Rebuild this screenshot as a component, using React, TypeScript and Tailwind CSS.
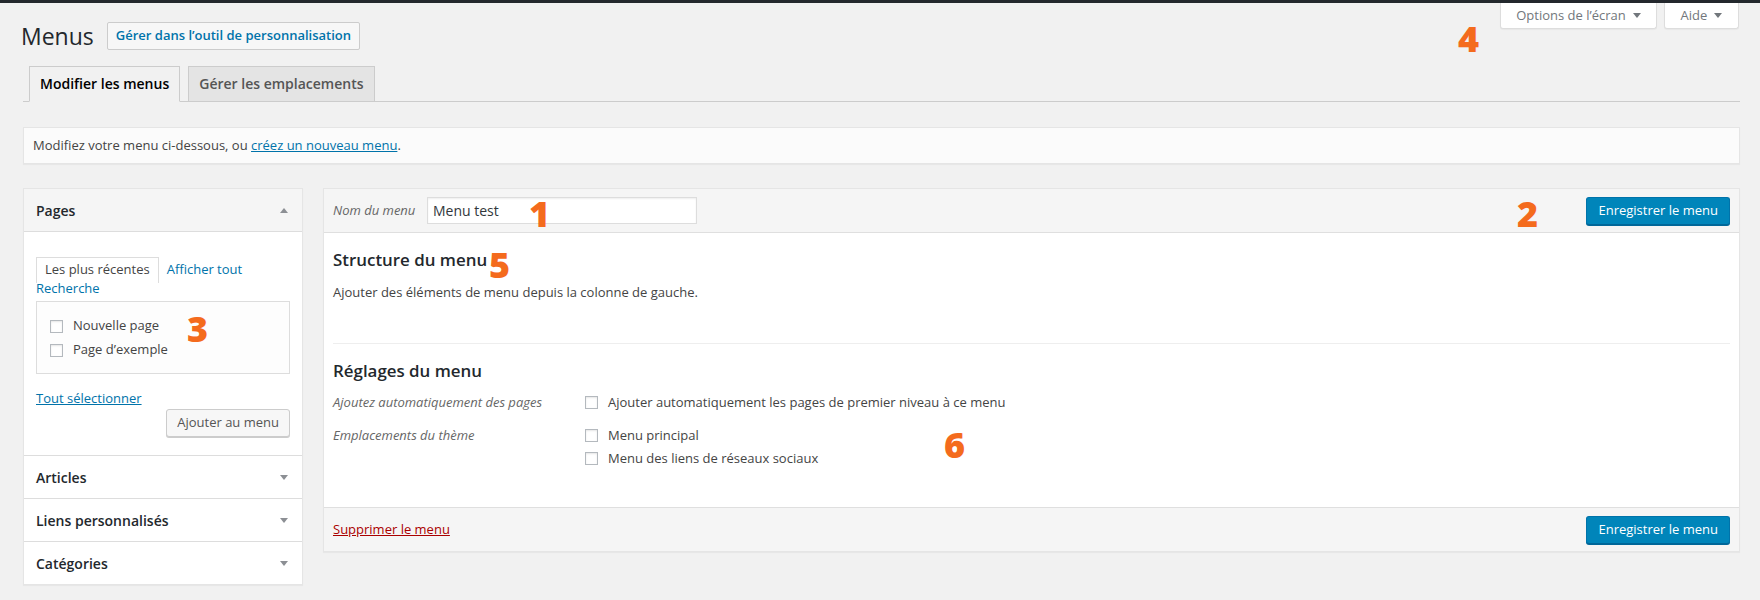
import React from "react";

function Tri({ up = false, className = "" }: { up?: boolean; className?: string }) {
  return (
    <svg width="8" height="5" viewBox="0 0 8 5" className={className} aria-hidden="true">
      <path d={up ? "M0 5H8L4 0Z" : "M0 0H8L4 5Z"} fill="currentColor" />
    </svg>
  );
}

function Box() {
  return (
    <span className="inline-block h-[13px] w-[13px] shrink-0 border border-[#b4b9be] bg-white shadow-[inset_0_1px_2px_rgba(0,0,0,0.1)]" />
  );
}

function Num({ n, className }: { n: string; className: string }) {
  return (
    <span
      className={
        "pointer-events-none absolute font-['Open_Sans',sans-serif] text-[36px] leading-none font-extrabold text-[#f46b1d] " +
        className
      }
    >
      {n}
    </span>
  );
}

const primaryBtn =
  "flex h-[28px] items-center rounded-[3px] border border-[#0073aa] border-b-[#006799] bg-[#0085ba] px-[11px] text-[13px] text-white shadow-[0_1px_0_#006799]";

export default function App() {
  return (
    <div className="relative min-h-[600px] w-full bg-[#f1f1f1] font-['Open_Sans',sans-serif] text-[13px] text-[#444]">
      <div className="h-[3px] bg-[#23282d]" />
      <div className="pl-[23px] pr-[20px]">
        {/* header row */}
        <div className="flex items-start justify-between">
          <div className="flex items-center pt-[16px]">
            <h1 className="-ml-[2px] text-[23px] leading-[34px] font-normal text-[#23282d]">Menus</h1>
            <span className="ml-[13px] flex h-[28px] items-center rounded-[2px] border border-[#ccc] bg-[#f7f7f7] px-[8px] text-[13px] font-semibold text-[#0073aa]">
              Gérer dans l’outil de personnalisation
            </span>
          </div>
          <div className="mr-px flex gap-[7px]">
            <div className="flex h-[26px] w-[157px] items-center justify-center gap-[7px] rounded-b-[3px] border border-t-0 border-[#ddd] bg-white text-[13px] text-[#72777c] shadow-[0_1px_1px_rgba(0,0,0,0.04)]">
              <span>Options de l’écran</span>
              <Tri className="text-[#72777c]" />
            </div>
            <div className="flex h-[26px] w-[75px] items-center justify-center gap-[7px] rounded-b-[3px] border border-t-0 border-[#ddd] bg-white text-[13px] text-[#72777c] shadow-[0_1px_1px_rgba(0,0,0,0.04)]">
              <span>Aide</span>
              <Tri className="text-[#72777c]" />
            </div>
          </div>
        </div>

        {/* tabs */}
        <div className="mt-[13px] flex border-b border-[#ccc]">
          <div className="-mb-px ml-[6px] border border-[#ccc] border-b-[#f1f1f1] bg-[#f1f1f1] px-[10px] py-[5px] text-[14px] leading-[24px] font-semibold text-black">
            Modifier les menus
          </div>
          <div className="-mb-px ml-[8px] border border-[#ccc] bg-[#e4e4e4] px-[10px] py-[5px] text-[14px] leading-[24px] font-semibold text-[#555]">
            Gérer les emplacements
          </div>
        </div>

        {/* notice */}
        <div className="mt-[25px] flex h-[37px] items-center border border-[#e5e5e5] bg-[#fbfbfb] pl-[9px] shadow-[0_1px_1px_rgba(0,0,0,0.04)]">
          <p>
            Modifiez votre menu ci-dessous, ou{" "}
            <a className="text-[#0073aa] underline">créez un nouveau menu</a>.
          </p>
        </div>

        {/* columns */}
        <div className="mt-[24px] flex items-start gap-[20px]">
          {/* left accordion */}
          <div className="w-[280px] shrink-0 border border-[#e5e5e5] bg-white shadow-[0_1px_1px_rgba(0,0,0,0.04)]">
            <div className="flex h-[43px] items-center justify-between border-b border-[#ddd] bg-[#f5f5f5] pl-[12px] pr-[14px] text-[14px] font-semibold text-[#23282d]">
              <span>Pages</span>
              <Tri up className="text-[#8c8f94]" />
            </div>
            <div className="px-[12px] pt-[25px] pb-[18px]">
              <div className="flex items-start">
                <span className="border border-b-0 border-[#ddd] bg-white px-[8px] pt-[2px] pb-[4px] leading-[19px] text-[#444]">
                  Les plus récentes
                </span>
                <span className="ml-[8px] pt-[3px] leading-[19px] text-[#0073aa]">Afficher tout</span>
              </div>
              <div className="-mt-[4px] leading-[19px] text-[#0073aa]">Recherche</div>
              <div className="mt-[3px] border border-[#ddd] bg-[#fdfdfd] pt-[12px] pb-[11px] pl-[13px]">
                <div className="flex h-[24px] items-center gap-[10px]">
                  <Box />
                  <span>Nouvelle page</span>
                </div>
                <div className="flex h-[24px] items-center gap-[10px]">
                  <Box />
                  <span>Page d’exemple</span>
                </div>
              </div>
              <div className="mt-[15px] leading-[19px]">
                <a className="text-[#0073aa] underline">Tout sélectionner</a>
              </div>
              <div className="mt-px flex justify-end">
                <span className="flex h-[28px] items-center rounded-[3px] border border-[#ccc] bg-[#f7f7f7] px-[10px] text-[#555] shadow-[0_1px_0_#ccc]">
                  Ajouter au menu
                </span>
              </div>
            </div>
            {["Articles", "Liens personnalisés", "Catégories"].map((t) => (
              <div
                key={t}
                className="flex h-[43px] items-center justify-between border-t border-[#ddd] pl-[12px] pr-[14px] text-[14px] font-semibold text-[#23282d]"
              >
                <span>{t}</span>
                <Tri className="text-[#8c8f94]" />
              </div>
            ))}
          </div>

          {/* main panel */}
          <div className="min-w-0 flex-1 border border-[#e5e5e5] bg-white shadow-[0_1px_1px_rgba(0,0,0,0.04)]">
            <div className="flex h-[44px] items-center justify-between border-b border-[#dfdfdf] bg-[#f5f5f5] px-[9px]">
              <div className="flex items-center">
                <span className="w-[94px] italic text-[#666]">Nom du menu</span>
                <div className="flex h-[27px] w-[270px] items-center border border-[#ddd] bg-white pl-[5px] text-[14px] text-[#32373c] shadow-[inset_0_1px_2px_rgba(0,0,0,0.07)]">
                  Menu test
                </div>
              </div>
              <span className={primaryBtn}>Enregistrer le menu</span>
            </div>

            <div className="px-[9px] pt-[16px] pb-[37px]">
              <h3 className="text-[16.9px] leading-[22px] font-semibold text-[#23282d]">Structure du menu</h3>
              <p className="mt-[12px] leading-[19px]">Ajouter des éléments de menu depuis la colonne de gauche.</p>
              <div className="mt-[41px] border-t border-[#eee]" />
              <h3 className="mt-[16px] text-[16.9px] leading-[22px] font-semibold text-[#23282d]">Réglages du menu</h3>
              <div className="mt-[11px] flex leading-[19px]">
                <span className="w-[252px] shrink-0 italic text-[#666]">Ajoutez automatiquement des pages</span>
                <div className="flex items-center gap-[10px]">
                  <Box />
                  <span>Ajouter automatiquement les pages de premier niveau à ce menu</span>
                </div>
              </div>
              <div className="mt-[12px] flex">
                <span className="w-[252px] shrink-0 italic leading-[23px] text-[#666]">Emplacements du thème</span>
                <div>
                  <div className="flex h-[23px] items-center gap-[10px]">
                    <Box />
                    <span>Menu principal</span>
                  </div>
                  <div className="flex h-[23px] items-center gap-[10px]">
                    <Box />
                    <span>Menu des liens de réseaux sociaux</span>
                  </div>
                </div>
              </div>
            </div>

            <div className="flex h-[44px] items-center justify-between border-t border-[#dfdfdf] bg-[#f5f5f5] px-[9px]">
              <a className="text-[#a00] underline">Supprimer le menu</a>
              <span className={primaryBtn}>Enregistrer le menu</span>
            </div>
          </div>
        </div>
      </div>

      {/* annotation numbers */}
      <Num n="1" className="left-[529px] top-[196px]" />
      <Num n="2" className="left-[1517px] top-[196px]" />
      <Num n="3" className="left-[187px] top-[311px]" />
      <Num n="4" className="left-[1458px] top-[21px]" />
      <Num n="5" className="left-[489px] top-[247px]" />
      <Num n="6" className="left-[944px] top-[427px]" />
    </div>
  );
}
